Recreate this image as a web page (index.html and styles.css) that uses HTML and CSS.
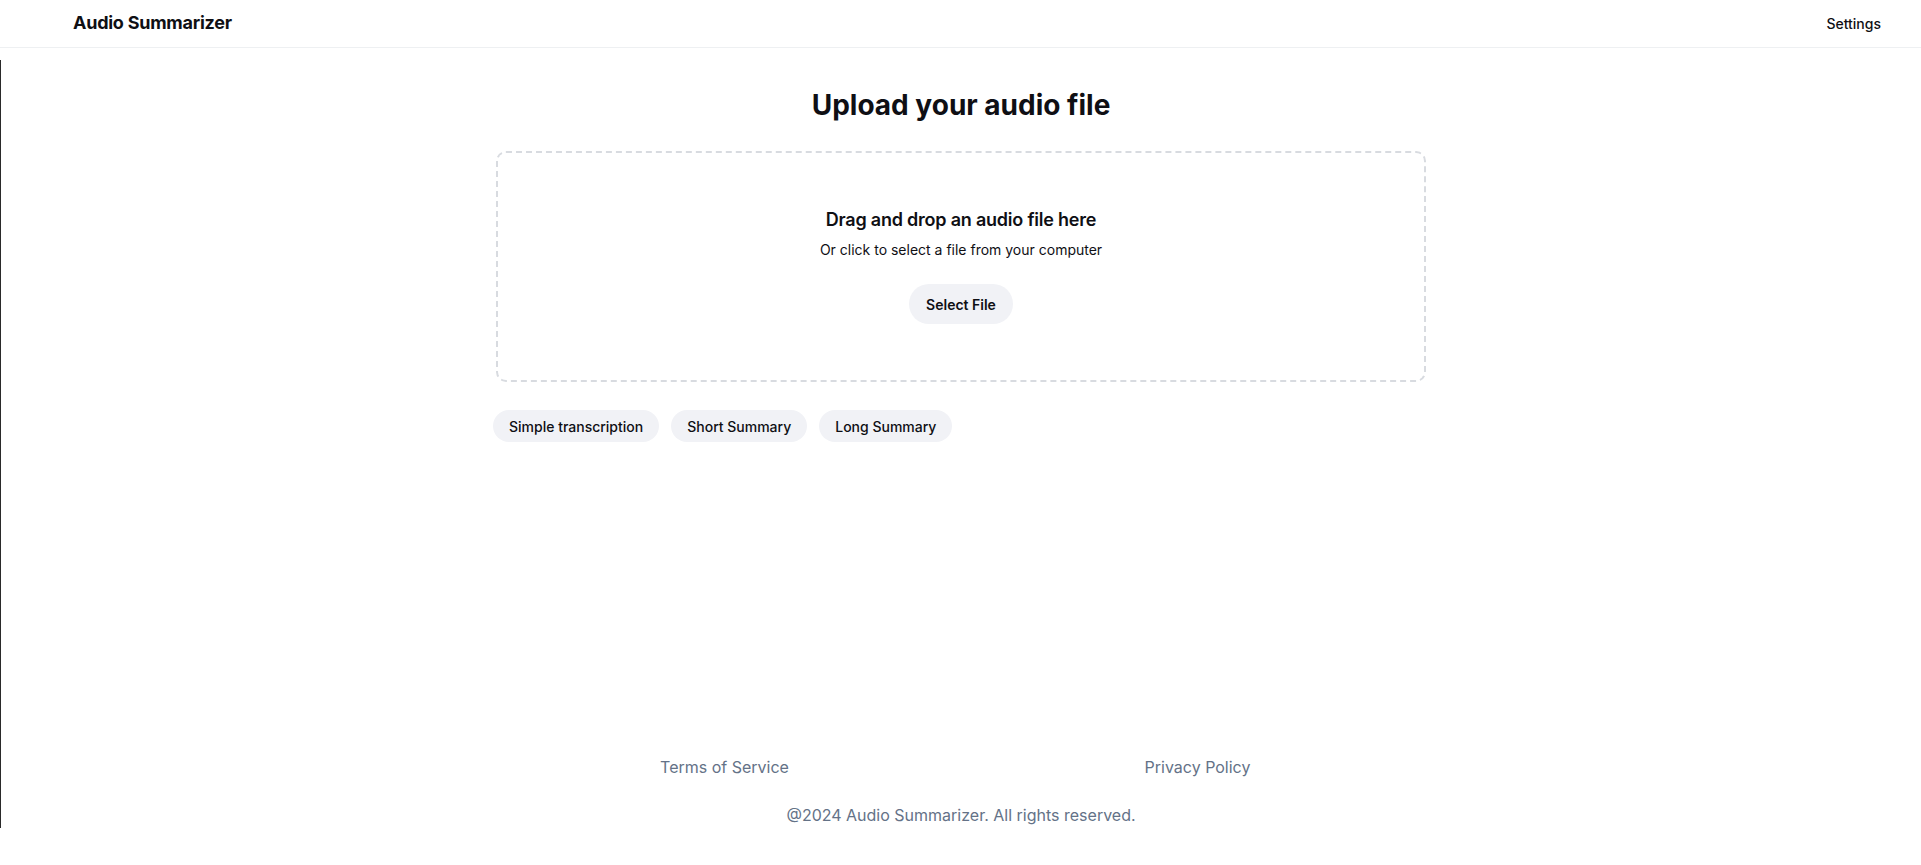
FILE: index.html
```html
<!DOCTYPE html>
<html lang="en">
<head>
<meta charset="utf-8">
<title>Audio Summarizer</title>
<link rel="stylesheet" href="styles.css">
</head>
<body>
<header class="topbar">
  <div class="brand">Audio Summarizer</div>
  <a class="nav-link" href="#">Settings</a>
</header>
<div class="frame">
  <main class="main">
    <h1 class="title">Upload your audio file</h1>
    <div class="dropzone">
      <h2 class="drop-title">Drag and drop an audio file here</h2>
      <p class="drop-sub">Or click to select a file from your computer</p>
      <button class="btn">Select File</button>
    </div>
    <div class="modes">
      <button class="pill">Simple transcription</button>
      <button class="pill">Short Summary</button>
      <button class="pill">Long Summary</button>
    </div>
  </main>
  <footer class="footer">
    <div class="footer-links">
      <a href="#" class="footer-link">Terms of Service</a>
      <a href="#" class="footer-link">Privacy Policy</a>
    </div>
    <p class="copy">@2024 Audio Summarizer. All rights reserved.</p>
  </footer>
</div>
</body>
</html>
```
FILE: styles.css
```css
* { box-sizing: border-box; }
html, body { margin: 0; padding: 0; }
body {
  font-family: Inter, "Noto Sans", sans-serif;
  color: #0f0f14;
  background: #fff;
  height: 865px;
  overflow: hidden;
}
.topbar {
  height: 48px;
  border-bottom: 1px solid #eef0f2;
  display: flex;
  align-items: center;
  justify-content: space-between;
  padding: 0 40px 0 73px;
}
.brand {
  font-size: 18px;
  font-weight: 700;
  line-height: 28px;
  letter-spacing: -0.25px;
  margin-top: -1px;
}
.nav-link {
  font-size: 14px;
  line-height: 20px;
  color: #0f0f14;
  text-decoration: none;
  font-weight: 500;
}
.frame {
  margin-top: 12px;
  height: 768px;
  border-left: 1px solid #2a2a2a;
  display: flex;
  flex-direction: column;
}
.main {
  flex: 1;
  display: flex;
  flex-direction: column;
  align-items: center;
  padding-top: 27px;
}
.title {
  margin: 0 0 28px;
  font-size: 28px;
  line-height: 36px;
  font-weight: 700;
}
.dropzone {
  width: 930px;
  height: 231px;
  border: 2px dashed #d8dbe0;
  border-radius: 10px;
  display: flex;
  flex-direction: column;
  align-items: center;
  padding-top: 53px;
}
.drop-title {
  margin: 0;
  font-size: 18px;
  line-height: 28px;
  font-weight: 600;
  letter-spacing: -0.22px;
}
.drop-sub {
  margin: 6px 0 0;
  font-size: 14px;
  line-height: 20px;
}
.btn {
  margin-top: 24px;
  height: 40px;
  width: 104px;
  border: 0;
  border-radius: 999px;
  background: #f1f2f6;
  font-family: inherit;
  font-size: 14px;
  font-weight: 600;
  color: #0f0f14;
}
.modes {
  width: 936px;
  display: flex;
  gap: 12px;
  margin-top: 28px;
}
.pill {
  height: 32px;
  padding: 0 16px;
  border: 0;
  border-radius: 999px;
  background: #f1f2f6;
  font-family: inherit;
  font-size: 14px;
  font-weight: 500;
  color: #0f0f14;
}
.footer {
  display: flex;
  flex-direction: column;
  align-items: center;
  padding-bottom: 1px;
}
.footer-links {
  width: 946px;
  display: grid;
  grid-template-columns: 1fr 1fr;
  justify-items: center;
}
.footer-link {
  font-size: 16px;
  line-height: 24px;
  color: #647287;
  text-decoration: none;
}
.copy {
  margin: 24px 0 0;
  font-size: 16px;
  line-height: 24px;
  color: #647287;
}
```
